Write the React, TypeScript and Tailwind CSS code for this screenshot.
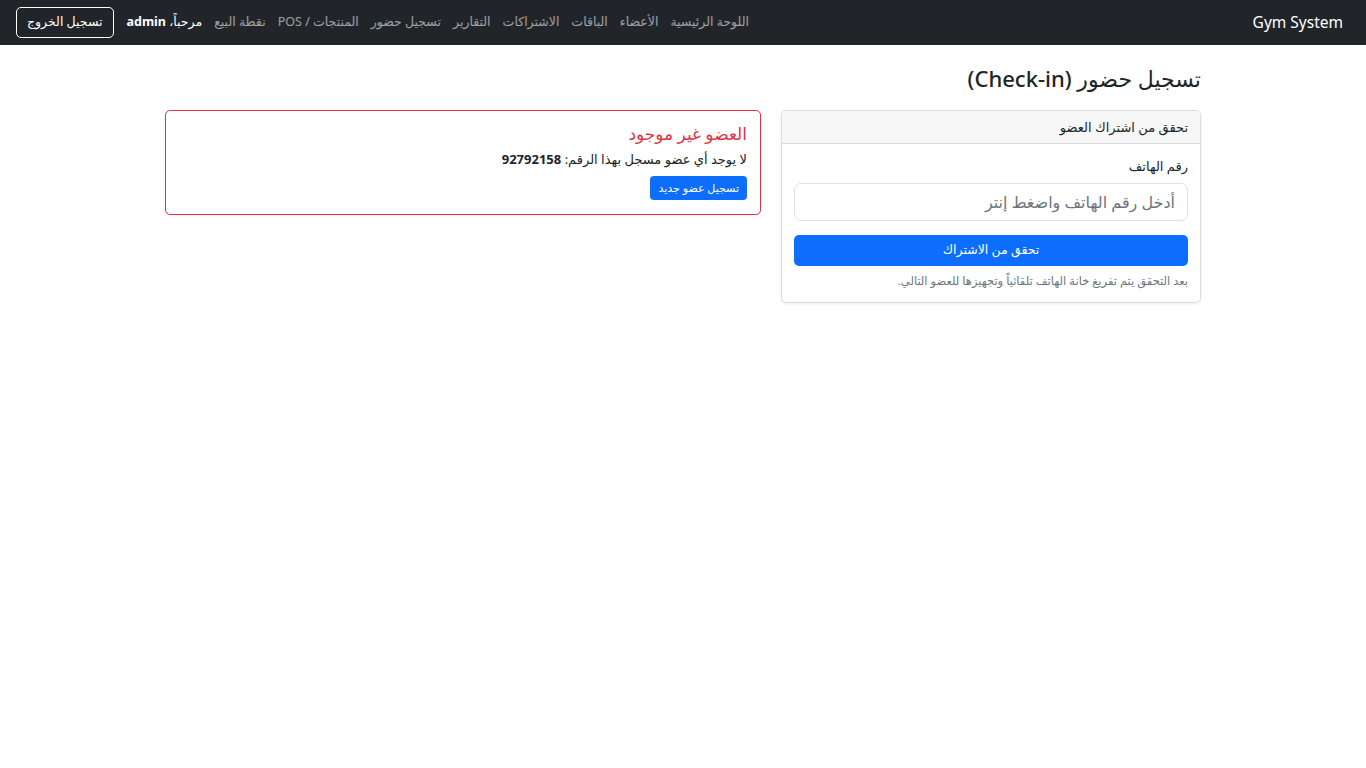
import React from 'react';

const links = [
  'اللوحة الرئيسية',
  'الأعضاء',
  'الباقات',
  'الاشتراكات',
  'التقارير',
  'تسجيل حضور',
  'المنتجات / POS',
  'نقطة البيع',
];

function Navbar() {
  return (
    <nav className="h-[45px] bg-[#212529] flex items-center justify-between pr-[23px] pl-4">
      <a className="text-[15.5px] text-white whitespace-nowrap">Gym System</a>
      <div className="flex items-center">
        <ul className="flex items-center">
          {links.map((l) => (
            <li key={l}>
              <a className="block px-[6px] text-[12.5px] text-white/55 whitespace-nowrap">{l}</a>
            </li>
          ))}
        </ul>
        <span className="text-[12.5px] text-white mr-[6px] ml-[13px] whitespace-nowrap">
          مرحباً، <strong className="font-bold">admin</strong>
        </span>
        <button className="h-[31px] px-[10px] border border-white rounded-[5px] text-white text-[12.5px] whitespace-nowrap">
          تسجيل الخروج
        </button>
      </div>
    </nav>
  );
}

function CheckCard() {
  return (
    <div className="w-[420px] shrink-0 border border-[#dcdcdc] rounded-[5px] bg-white shadow-[0_1px_3px_rgba(0,0,0,0.08)] overflow-hidden">
      <div className="bg-[#f7f7f7] border-b border-[#dcdcdc] px-3 py-2 text-[13px] leading-[16px] text-[#212529]">
        تحقق من اشتراك العضو
      </div>
      <div className="p-3">
        <label className="block text-[13px] leading-[21px] text-[#212529] mb-[6px]">رقم الهاتف</label>
        <input
          dir="rtl"
          className="w-full h-[38px] border border-[#dee2e6] rounded-[7px] px-3 text-[16px] text-[#212529] placeholder:text-[#6c757d] outline-none"
          placeholder="أدخل رقم الهاتف واضغط إنتر"
        />
        <button className="mt-[14px] w-full h-[31px] bg-[#0d6efd] rounded-[5px] text-white text-[12.5px]">
          تحقق من الاشتراك
        </button>
        <p className="mt-[6px] text-[11.5px] leading-[18px] text-[#6c757d]">
          بعد التحقق يتم تفريغ خانة الهاتف تلقائياً وتجهيزها للعضو التالي.
        </p>
      </div>
    </div>
  );
}

function NotFoundCard() {
  return (
    <div className="flex-1 self-start border border-[#dc3545] rounded-[5px] bg-white shadow-[0_1px_3px_rgba(0,0,0,0.06)] pt-3 pb-[14px] px-[13px]">
      <h5 className="text-[17px] leading-[22px] font-medium text-[#dc3545]">العضو غير موجود</h5>
      <p className="mt-1 text-[13px] leading-[21px] text-[#212529]">
        لا يوجد أي عضو مسجل بهذا الرقم: <strong className="font-bold">92792158</strong>
      </p>
      <button className="mt-[6px] h-[24px] px-2 bg-[#0d6efd] rounded-[4px] text-white text-[11px]">
        تسجيل عضو جديد
      </button>
    </div>
  );
}

export default function App() {
  return (
    <div
      dir="rtl"
      className="min-h-screen bg-white text-[#212529]"
      style={{ fontFamily: '"Segoe UI", "Noto Sans", "DejaVu Sans", sans-serif' }}
    >
      <Navbar />
      <main className="w-[1036px] mx-auto">
        <h1 className="mt-[19px] mb-[17px] text-[22px] leading-[29px] font-medium">تسجيل حضور (Check-in)</h1>
        <div className="flex gap-5 items-start">
          <CheckCard />
          <NotFoundCard />
        </div>
      </main>
    </div>
  );
}
